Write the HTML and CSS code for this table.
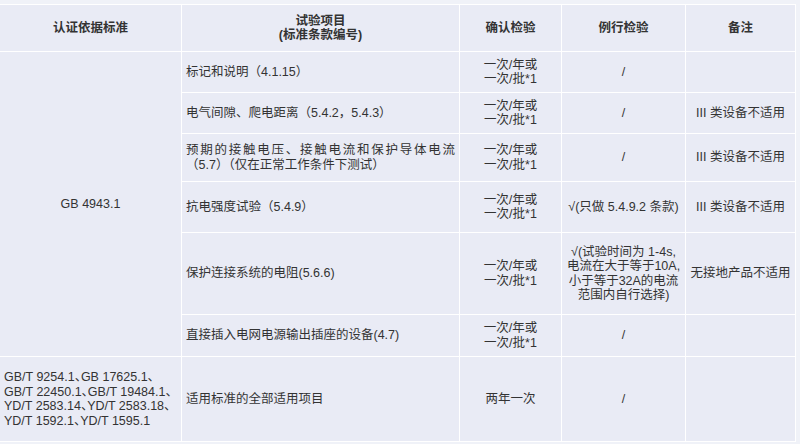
FILE: index.html
```html
<!DOCTYPE html>
<html lang="zh-CN">
<head>
<meta charset="utf-8">
<link rel="stylesheet" href="styles.css">
</head>
<body>
<table class="spec">
  <colgroup>
    <col class="c1"><col class="c2"><col class="c3"><col class="c4"><col class="c5">
  </colgroup>
  <thead>
    <tr class="h-head">
      <th>认证依据标准</th>
      <th>试验项目<br>(标准条款编号)</th>
      <th>确认检验</th>
      <th>例行检验</th>
      <th>备注</th>
    </tr>
  </thead>
  <tbody>
    <tr class="h-41">
      <td class="std center" rowspan="6">GB 4943.1</td>
      <td class="item">标记和说明（4.1.15）</td>
      <td class="center">一次/年或<br>一次/批*1</td>
      <td class="center">/</td>
      <td class="center"></td>
    </tr>
    <tr class="h-41">
      <td class="item">电气间隙、爬电距离（5.4.2，5.4.3）</td>
      <td class="center">一次/年或<br>一次/批*1</td>
      <td class="center">/</td>
      <td class="center nowrap">III 类设备不适用</td>
    </tr>
    <tr class="h-48">
      <td class="item justify">预期的接触电压、接触电流和保护导体电流（5.7）（仅在正常工作条件下测试）</td>
      <td class="center">一次/年或<br>一次/批*1</td>
      <td class="center">/</td>
      <td class="center nowrap">III 类设备不适用</td>
    </tr>
    <tr class="h-51">
      <td class="item">抗电强度试验（5.4.9）</td>
      <td class="center">一次/年或<br>一次/批*1</td>
      <td class="center nowrap">√(只做 5.4.9.2 条款)</td>
      <td class="center nowrap">III 类设备不适用</td>
    </tr>
    <tr class="h-82">
      <td class="item">保护连接系统的电阻(5.6.6)</td>
      <td class="center">一次/年或<br>一次/批*1</td>
      <td class="center nowrap tight">√(试验时间为 1-4s,<br>电流在大于等于10A,<br>小于等于32A的电流<br>范围内自行选择)</td>
      <td class="center nowrap tight">无接地产品不适用</td>
    </tr>
    <tr class="h-42">
      <td class="item">直接插入电网电源输出插座的设备(4.7)</td>
      <td class="center">一次/年或<br>一次/批*1</td>
      <td class="center">/</td>
      <td class="center"></td>
    </tr>
    <tr class="h-85">
      <td class="std left nowrap">GB/T 9254.1、GB 17625.1、<br>GB/T 22450.1、GB/T 19484.1、<br>YD/T 2583.14、YD/T 2583.18、<br>YD/T 1592.1、YD/T 1595.1</td>
      <td class="item">适用标准的全部适用项目</td>
      <td class="center">两年一次</td>
      <td class="center">/</td>
      <td class="center"></td>
    </tr>
  </tbody>
</table>
</body>
</html>
```

FILE: styles.css
```css
html, body {
  margin: 0;
  padding: 0;
  background: #f0f2f8;
}

body {
  font-family: "Liberation Sans", "Noto Sans CJK SC", sans-serif;
  font-size: 12.5px;
  line-height: 14.5px;
  color: #333333;
}

.spec {
  border-collapse: collapse;
  table-layout: fixed;
  width: 796px;
  margin: 4px 0 0 -1px;
  background: #e9ebf5;
}

.c1 { width: 182px; }
.c2 { width: 278px; }
.c3 { width: 102px; }
.c4 { width: 124px; }
.c5 { width: 110px; }

.spec th,
.spec td {
  border: 1px solid #ffffff;
  vertical-align: middle;
  padding: 0 4px;
}

.spec th {
  font-weight: bold;
  text-align: center;
  color: #333333;
}

.h-head { height: 47px; }
.h-41 { height: 41px; }
.h-42 { height: 42px; }
.h-48 { height: 48px; }
.h-51 { height: 51px; }
.h-82 { height: 82px; }
.h-85 { height: 85px; }

.center { text-align: center; }
.left { text-align: left; }
.nowrap { white-space: nowrap; }

.std.left {
  padding-left: 4px;
  padding-right: 0;
  font-feature-settings: "halt";
}

.item {
  text-align: left;
  padding-left: 6px;
  padding-right: 2px;
}

.justify { text-align: justify; }

.tight { padding: 0; }
```
